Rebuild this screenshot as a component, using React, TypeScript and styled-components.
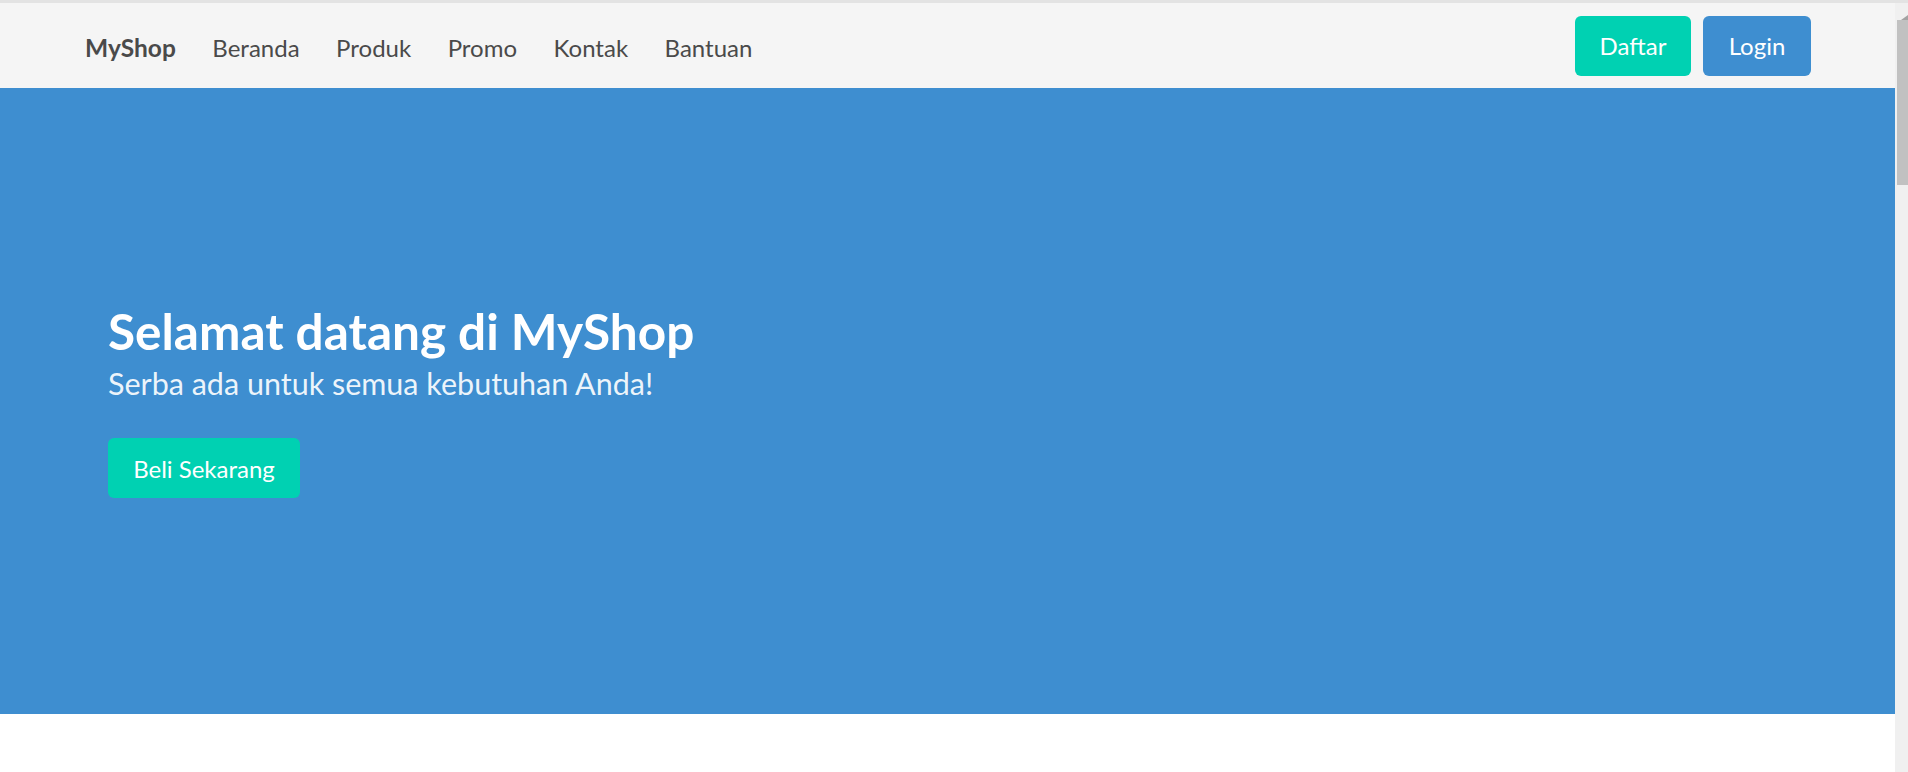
import React from "react";
import styled, { createGlobalStyle } from "styled-components";

const GlobalStyle = createGlobalStyle`
  html, body {
    margin: 0;
    padding: 0;
    overflow: hidden;
  }
  body {
    font-family: Lato, "Open Sans", "Noto Sans", sans-serif;
    color: #4a4a4a;
  }
  * { box-sizing: border-box; }
`;

const Frame = styled.div`
  display: flex;
  height: 100vh;
  border-top: 3px solid #e3e3e3;
`;

const Page = styled.div`
  flex: 1;
  display: flex;
  flex-direction: column;
  background: #ffffff;
`;

const Navbar = styled.nav`
  height: 85px;
  flex-shrink: 0;
  background: #f5f5f5;
  display: flex;
  align-items: center;
  justify-content: space-between;
  padding: 0 84px 0 85px;
`;

const NavStart = styled.div`
  display: flex;
  align-items: center;
  gap: 36.5px;
  padding-top: 4px;
`;

const Brand = styled.a`
  font-size: 24.5px;
  font-weight: 700;
  color: #4a4a4a;
  text-decoration: none;
`;

const NavLink = styled.a`
  font-size: 24px;
  font-weight: 400;
  color: #4a4a4a;
  text-decoration: none;
`;

const NavEnd = styled.div`
  display: flex;
  align-items: center;
  gap: 12px;
`;

const Button = styled.button<{ $tone: "primary" | "info"; $width: number }>`
  height: 60px;
  width: ${(p) => p.$width}px;
  border: none;
  border-radius: 6px;
  font-family: inherit;
  font-size: 24px;
  color: #ffffff;
  background: ${(p) => (p.$tone === "primary" ? "#00d1b2" : "#3e8ed0")};
  display: inline-flex;
  align-items: center;
  justify-content: center;
  cursor: pointer;
  padding: 0;
`;

const Hero = styled.section`
  height: 626px;
  flex-shrink: 0;
  background: #3e8ed0;
  display: flex;
  align-items: center;
  padding-left: 108px;
`;

const HeroBody = styled.div`
  display: flex;
  flex-direction: column;
  align-items: flex-start;
`;

const Title = styled.h1`
  margin: 0;
  font-size: 49.5px;
  font-weight: 700;
  color: #ffffff;
  line-height: 55px;
`;

const Subtitle = styled.p`
  margin: 6px 0 0;
  font-size: 30.5px;
  font-weight: 400;
  color: rgba(255, 255, 255, 0.92);
  line-height: 37.5px;
`;

const CtaButton = styled.button`
  margin-top: 36px;
  height: 60px;
  width: 192px;
  border: none;
  border-radius: 6px;
  background: #00d1b2;
  color: #ffffff;
  font-family: inherit;
  font-size: 24px;
  padding: 0;
  cursor: pointer;
`;

const Filler = styled.div`
  flex: 1;
  background: #ffffff;
`;

const ScrollTrack = styled.div`
  width: 13px;
  flex-shrink: 0;
  background: #f0f0f0;
  display: flex;
  flex-direction: column;
  align-items: flex-end;
`;

const ArrowBox = styled.div`
  height: 17px;
  width: 11px;
  display: flex;
  align-items: flex-end;
  justify-content: flex-end;
`;

const Thumb = styled.div`
  width: 11px;
  height: 165px;
  background: #c1c1c1;
`;

export default function App() {
  return (
    <>
      <GlobalStyle />
      <Frame>
        <Page>
          <Navbar>
            <NavStart>
              <Brand href="#">MyShop</Brand>
              <NavLink href="#">Beranda</NavLink>
              <NavLink href="#">Produk</NavLink>
              <NavLink href="#">Promo</NavLink>
              <NavLink href="#">Kontak</NavLink>
              <NavLink href="#">Bantuan</NavLink>
            </NavStart>
            <NavEnd>
              <Button $tone="primary" $width={116}>Daftar</Button>
              <Button $tone="info" $width={108}>Login</Button>
            </NavEnd>
          </Navbar>
          <Hero>
            <HeroBody>
              <Title>Selamat datang di MyShop</Title>
              <Subtitle>Serba ada untuk semua kebutuhan Anda!</Subtitle>
              <CtaButton>Beli Sekarang</CtaButton>
            </HeroBody>
          </Hero>
          <Filler />
        </Page>
        <ScrollTrack>
          <ArrowBox>
            <svg width="7" height="5" viewBox="0 0 7 5">
              <polygon points="0,5 7,5 7,0" fill="#a3a3a3" />
            </svg>
          </ArrowBox>
          <Thumb />
        </ScrollTrack>
      </Frame>
    </>
  );
}
